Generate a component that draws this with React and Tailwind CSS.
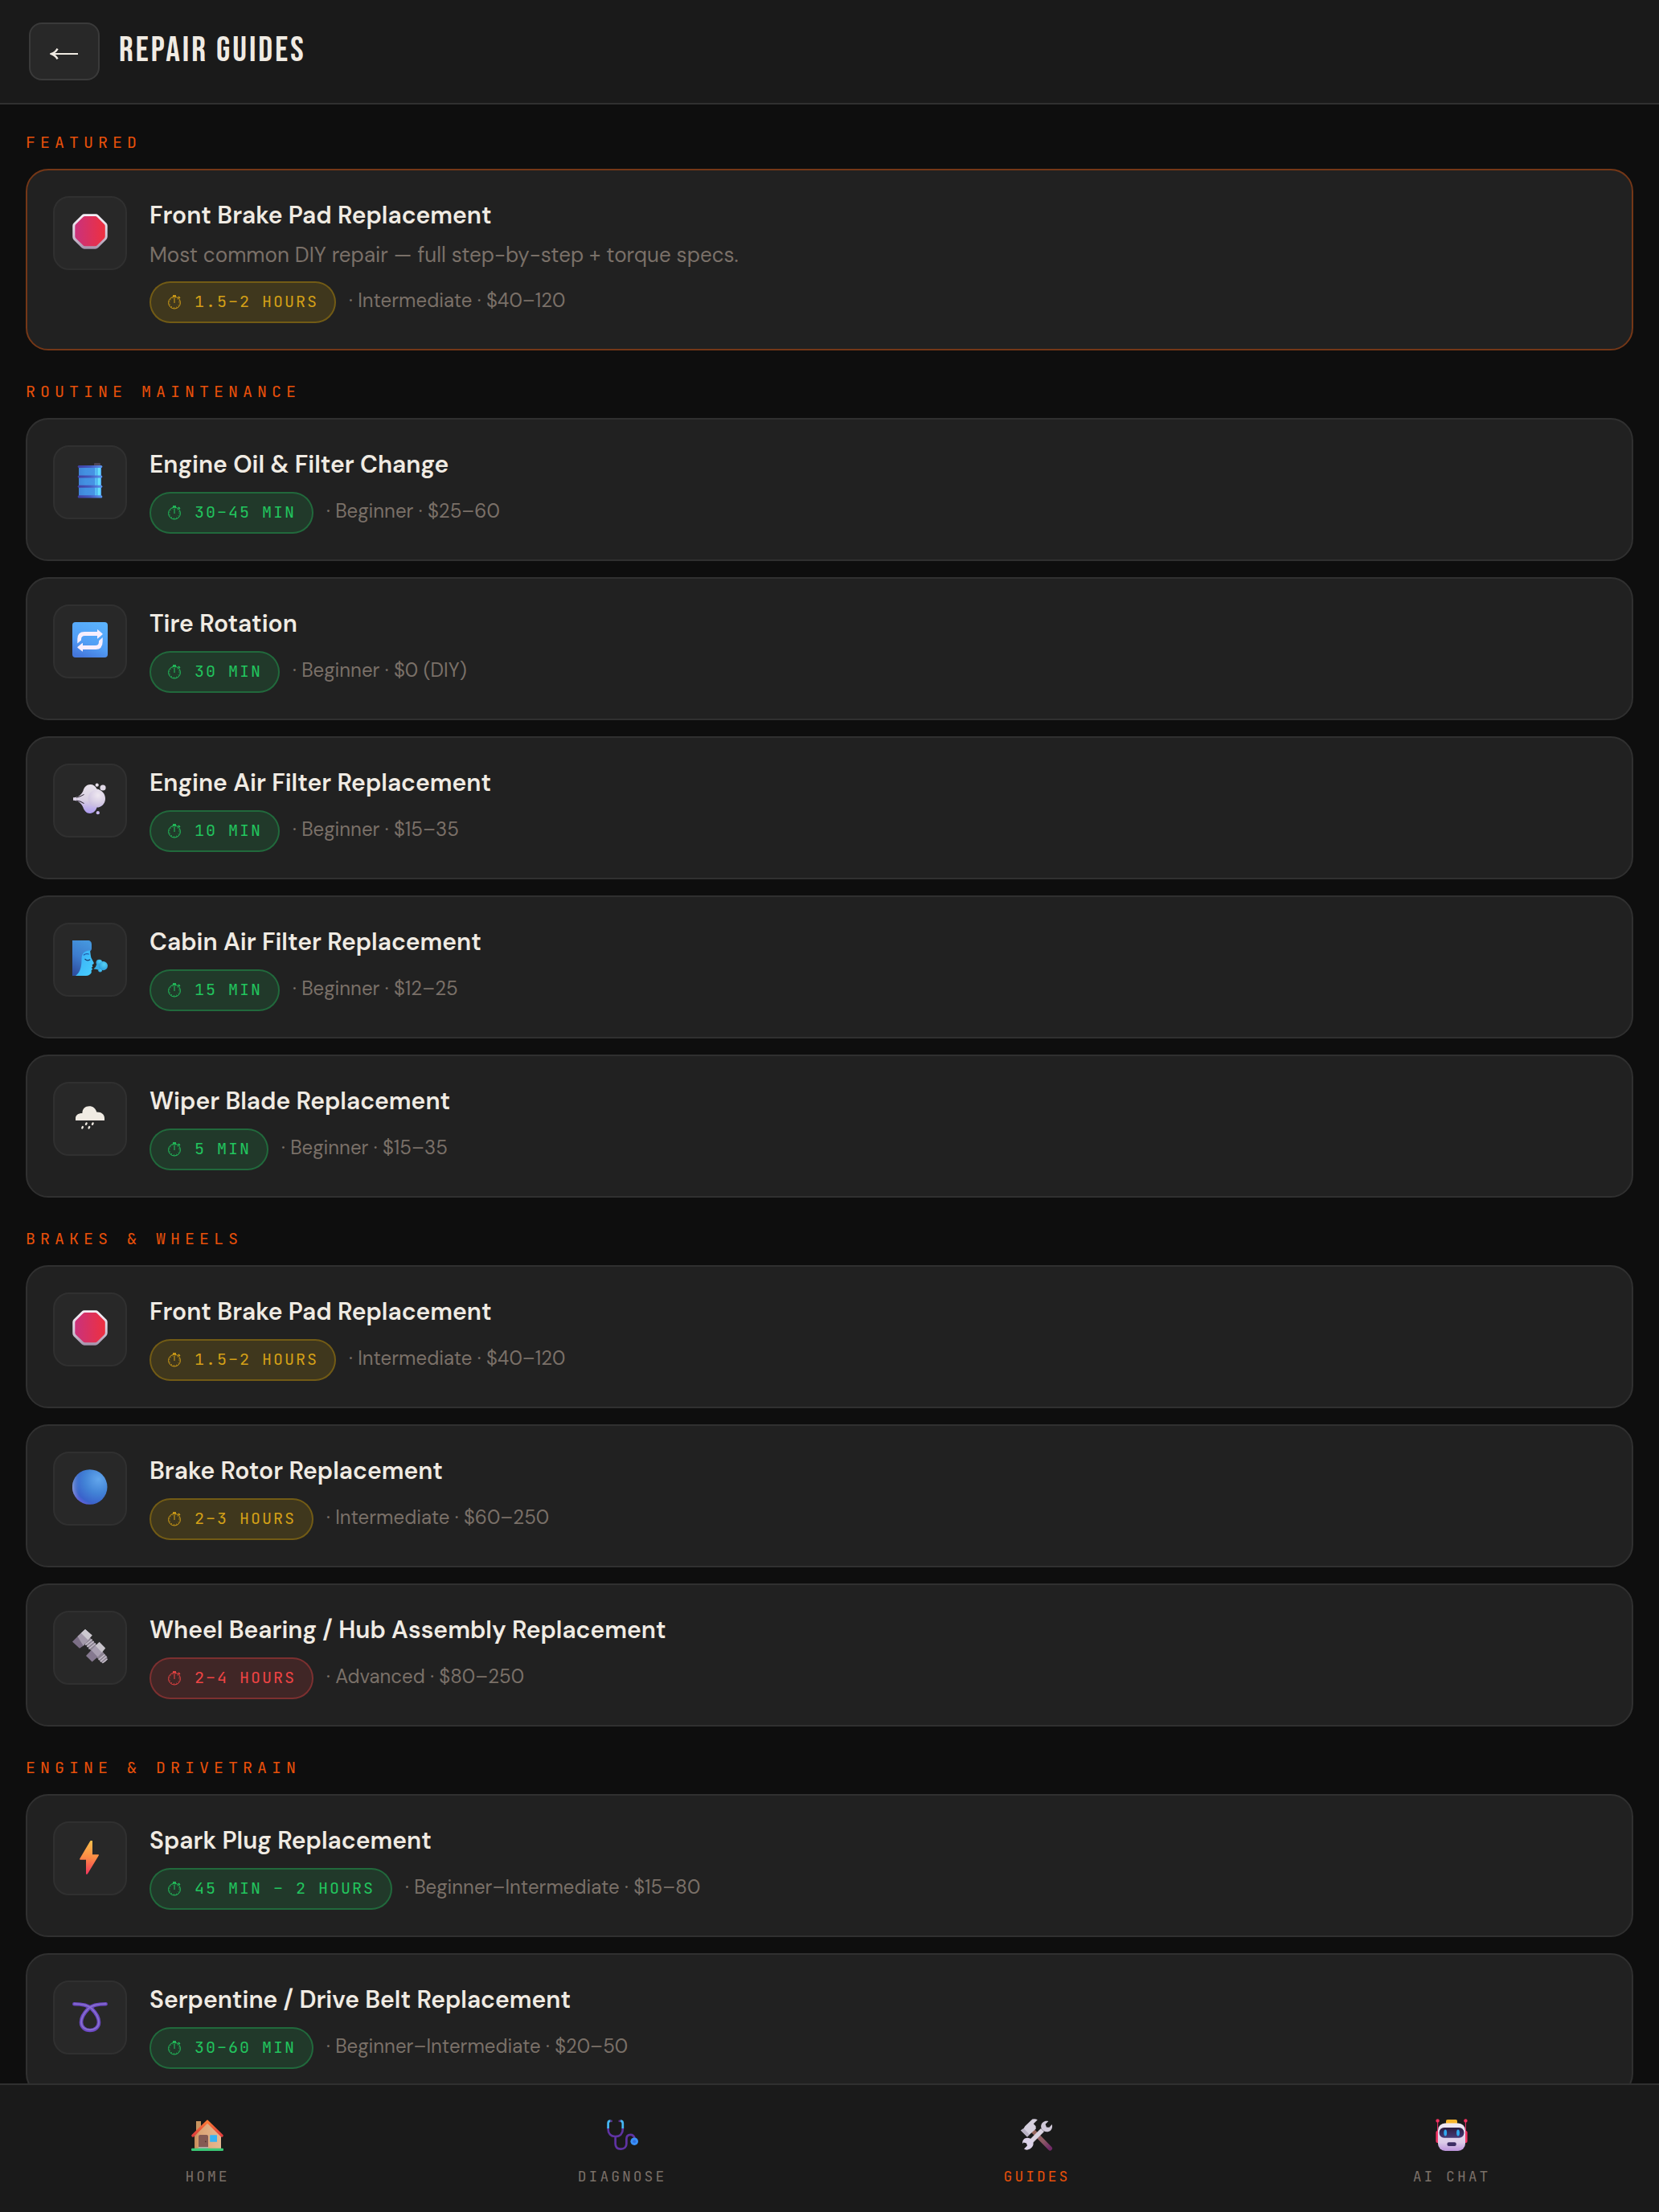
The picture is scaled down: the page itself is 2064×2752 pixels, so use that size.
import React from "react";

const guideGroups = [
  {
    label: "Featured",
    guides: [
      {
        icon: "stop",
        title: "Front Brake Pad Replacement",
        desc: "Most common DIY repair — full step-by-step + torque specs.",
        time: "1.5–2 hours",
        level: "Intermediate",
        cost: "$40–120",
        tone: "medium",
        featured: true,
      },
    ],
  },
  {
    label: "Routine Maintenance",
    guides: [
      { icon: "barrel", title: "Engine Oil & Filter Change", time: "30–45 min", level: "Beginner", cost: "$25–60", tone: "easy" },
      { icon: "repeat", title: "Tire Rotation", time: "30 min", level: "Beginner", cost: "$0 (DIY)", tone: "easy" },
      { icon: "puff", title: "Engine Air Filter Replacement", time: "10 min", level: "Beginner", cost: "$15–35", tone: "easy" },
      { icon: "wind", title: "Cabin Air Filter Replacement", time: "15 min", level: "Beginner", cost: "$12–25", tone: "easy" },
      { icon: "rain", title: "Wiper Blade Replacement", time: "5 min", level: "Beginner", cost: "$15–35", tone: "easy" },
    ],
  },
  {
    label: "Brakes & Wheels",
    guides: [
      { icon: "stop", title: "Front Brake Pad Replacement", time: "1.5–2 hours", level: "Intermediate", cost: "$40–120", tone: "medium" },
      { icon: "disc", title: "Brake Rotor Replacement", time: "2–3 hours", level: "Intermediate", cost: "$60–250", tone: "medium" },
      { icon: "bolt", title: "Wheel Bearing / Hub Assembly Replacement", time: "2–4 hours", level: "Advanced", cost: "$80–250", tone: "hard" },
    ],
  },
  {
    label: "Engine & Drivetrain",
    guides: [
      { icon: "spark", title: "Spark Plug Replacement", time: "45 min – 2 hours", level: "Beginner–Intermediate", cost: "$15–80", tone: "easy" },
      { icon: "loop", title: "Serpentine / Drive Belt Replacement", time: "30–60 min", level: "Beginner–Intermediate", cost: "$20–50", tone: "easy" },
    ],
  },
];

const tones = {
  easy: "bg-[#22c55e]/15 border-[#22c55e]/35 text-[#22c55e]",
  medium: "bg-[#eab308]/15 border-[#eab308]/30 text-[#d4a017]",
  hard: "bg-[#ef4444]/15 border-[#ef4444]/35 text-[#ef4444]",
};

const StopIcon = () => (
  <svg viewBox="0 0 44 44" className="size-11" aria-hidden="true">
    <defs>
      <linearGradient id="stopRim" x1="0" y1="0" x2="0" y2="1">
        <stop offset="0" stopColor="#f6f1f8" />
        <stop offset="0.6" stopColor="#d3c9d8" />
        <stop offset="1" stopColor="#a393ab" />
      </linearGradient>
      <linearGradient id="stopFace" x1="0" y1="0" x2="1" y2="0">
        <stop offset="0" stopColor="#c9327c" />
        <stop offset="1" stopColor="#ee3040" />
      </linearGradient>
    </defs>
    <path d="M15 0.3H29Q31 0.3 32.4 1.7L42.3 11.6Q43.7 13 43.7 15V28.5Q43.7 30.5 42.3 31.9L32 42.3Q30.6 43.7 28.6 43.7H15Q13 43.7 11.6 42.3L1.7 32.4Q0.3 31 0.3 29V15Q0.3 13 1.7 11.6L11.6 1.7Q13 0.3 15 0.3Z" fill="url(#stopRim)" />
    <path d="M15.8 3H28.4Q29.8 3 30.8 4L39.8 13Q40.8 14 40.8 15.4V28Q40.8 29.4 39.8 30.4L30.8 39.3Q29.8 40.3 28.4 40.3H15.8Q14.4 40.3 13.4 39.3L4.3 30.4Q3.3 29.4 3.3 28V15.4Q3.3 14 4.3 13L13.4 4Q14.4 3 15.8 3Z" fill="url(#stopFace)" />
  </svg>
);

const BarrelIcon = () => (
  <svg viewBox="0 0 44 44" className="size-11" aria-hidden="true">
    <defs>
      <linearGradient id="barrelBody" x1="0" y1="0" x2="1" y2="0">
        <stop offset="0" stopColor="#3f83d6" />
        <stop offset="0.3" stopColor="#4391e2" />
        <stop offset="0.7" stopColor="#4793e4" />
        <stop offset="0.76" stopColor="#5fd0fa" />
        <stop offset="0.8" stopColor="#4aa8ee" />
        <stop offset="0.9" stopColor="#6ff0ff" />
        <stop offset="1" stopColor="#4a9df0" />
      </linearGradient>
      <linearGradient id="barrelRib" x1="0" y1="0" x2="1" y2="0">
        <stop offset="0" stopColor="#413ea0" />
        <stop offset="0.5" stopColor="#4358bd" />
        <stop offset="1" stopColor="#5b95ee" />
      </linearGradient>
    </defs>
    <rect x="27" y="0" width="8" height="4" rx="1" fill="#4d4456" />
    <rect x="8" y="4" width="28" height="38" fill="url(#barrelBody)" />
    <rect x="6.7" y="3" width="30.6" height="3" rx="1.5" fill="url(#barrelRib)" />
    <rect x="6.7" y="15.4" width="30.6" height="3" rx="1.5" fill="url(#barrelRib)" />
    <rect x="6.7" y="27.8" width="30.6" height="3" rx="1.5" fill="url(#barrelRib)" />
    <rect x="6.7" y="40.3" width="30.6" height="3.2" rx="1.5" fill="url(#barrelRib)" />
  </svg>
);

const RepeatIcon = () => (
  <svg viewBox="0 0 44 44" className="size-11" aria-hidden="true">
    <defs>
      <linearGradient id="repeatBg" x1="0.7" y1="0" x2="0.3" y2="1">
        <stop offset="0" stopColor="#5ab2fd" />
        <stop offset="0.6" stopColor="#529ef5" />
        <stop offset="1" stopColor="#4477dc" />
      </linearGradient>
    </defs>
    <rect width="44" height="44" rx="4" fill="url(#repeatBg)" />
    <g fill="#f7eefd">
      <path d="M6.3 26.5V21Q6.3 12 15 12H31V9.6Q31 8.6 31.8 9.4L37.4 14.2Q38 14.8 37.4 15.4L31.8 20.2Q31 21 31 20V17H15.5Q11 17 11 21.5V22.6Z" />
      <path d="M37.7 19V24Q37.7 34 29 34H13V36Q13 37 12.2 36.3L6.6 32Q6 31.4 6.6 30.8L12.2 26.2Q13 25.5 13 26.5V29H28.5Q33 29 33 24.5V23.2Z" />
    </g>
  </svg>
);

const PuffIcon = () => (
  <svg viewBox="0 0 44 44" className="size-11" aria-hidden="true">
    <defs>
      <linearGradient id="puffFill" x1="0.5" y1="0" x2="0.4" y2="1">
        <stop offset="0" stopColor="#e8e2ec" />
        <stop offset="0.55" stopColor="#d8cfe2" />
        <stop offset="1" stopColor="#ab98f0" />
      </linearGradient>
      <radialGradient id="puffGlow" cx="0.6" cy="0.3" r="0.7">
        <stop offset="0" stopColor="#f4eef4" />
        <stop offset="1" stopColor="#c9bdde" />
      </radialGradient>
    </defs>
    <path d="M1 20.3C8 20 11 16.5 13.4 12C14.6 7 18 4 22.3 4C26 4 29 6 30.4 9.5C36.5 10.5 41 15.5 41 21.5C41 28 36.2 32.6 30.6 32.6C29.2 37 26 40 22 40C17.5 40 14.8 36.5 13.2 32C11 27.5 7.5 24 1 23.8Z" fill="url(#puffFill)" />
    <ellipse cx="30" cy="21.5" rx="10.5" ry="10.5" fill="url(#puffGlow)" opacity="0.75" />
    <path d="M5 20.2C9 19.6 12 18 14.5 16.4M5 24C9 24.4 12 25.6 14.5 27.6" fill="none" stroke="#37303c" strokeWidth="1.1" />
    <circle cx="30.7" cy="4.7" r="2.1" fill="#e6dfe8" />
    <circle cx="38" cy="8" r="3.6" fill="#e0d8e6" />
    <circle cx="31.8" cy="39.2" r="2.1" fill="#c8b8f0" />
  </svg>
);

const WindIcon = () => (
  <svg viewBox="0 0 44 44" className="size-11" aria-hidden="true">
    <defs>
      <linearGradient id="windHair" x1="0.6" y1="0" x2="0.3" y2="1">
        <stop offset="0" stopColor="#4596dd" />
        <stop offset="0.5" stopColor="#3d7ccd" />
        <stop offset="1" stopColor="#2f4f9f" />
      </linearGradient>
      <linearGradient id="windFace" x1="0" y1="0" x2="1" y2="1">
        <stop offset="0" stopColor="#38abf5" />
        <stop offset="1" stopColor="#48d0ff" />
      </linearGradient>
      <radialGradient id="windPuff" cx="0.6" cy="0.35" r="0.7">
        <stop offset="0" stopColor="#55d2f4" />
        <stop offset="1" stopColor="#2b9bdc" />
      </radialGradient>
    </defs>
    <path d="M0 0H19C22.5 0 24 2 24 5V10C24 14 20 14 16 16L12 44H0Z" fill="url(#windHair)" />
    <path d="M4 44C10 40 11.5 32 11.5 24C11.5 17 14 13 22 12.5C22.6 16 22.8 19 23.4 21.5L26.8 28Q27.2 29.5 24.6 30.2L25.4 32.8L23.6 34L25.2 35.6L23.6 37.4L23.8 40Q21.5 44 17 44Z" fill="url(#windFace)" />
    <path d="M14.4 18C16 16.6 18.4 16.4 20.4 17" fill="none" stroke="#2257a8" strokeWidth="1.2" strokeLinecap="round" />
    <path d="M16 23.4C17.4 25 20 25 21.8 24" fill="none" stroke="#173a6c" strokeWidth="1.4" strokeLinecap="round" />
    <path d="M26.4 35.6L31 31L34 36.5Z" fill="#38aee5" />
    <circle cx="33.4" cy="27.6" r="3.9" fill="url(#windPuff)" />
    <circle cx="34.6" cy="37.2" r="2.4" fill="url(#windPuff)" />
    <circle cx="32.6" cy="33" r="3.4" fill="#38aee5" />
    <circle cx="38.4" cy="31.6" r="5.6" fill="url(#windPuff)" />
  </svg>
);

const RainIcon = () => (
  <svg viewBox="0 0 44 44" className="size-11" aria-hidden="true">
    <path d="M4 26V23.5C4 19.5 7 17 12.4 17C12.4 11.5 16 8.3 21 8.3C25.8 8.3 29 11 30.2 15.4C36.4 15.2 40 18.5 40 23V26Z" fill="#f0ebe3" />
    <path d="M17.6 29.4L17 30.8M25.6 29.4L25 30.8M12.9 34L12.3 35.4M21.2 34L20.6 35.4" stroke="#f0ebe3" strokeWidth="2.4" strokeLinecap="round" />
  </svg>
);

const DiscIcon = () => (
  <svg viewBox="0 0 44 44" className="size-11" aria-hidden="true">
    <defs>
      <radialGradient id="discFill" cx="0.75" cy="0.28" r="0.8">
        <stop offset="0" stopColor="#62a6ec" />
        <stop offset="0.5" stopColor="#4283d6" />
        <stop offset="0.88" stopColor="#3a63cb" />
        <stop offset="1" stopColor="#5a62d8" />
      </radialGradient>
      <linearGradient id="discEdge" x1="0" y1="0" x2="1" y2="0">
        <stop offset="0" stopColor="#a0b8d8" stopOpacity="0.6" />
        <stop offset="0.2" stopColor="#7090c8" stopOpacity="0" />
      </linearGradient>
    </defs>
    <circle cx="21.7" cy="22" r="21.8" fill="url(#discFill)" />
    <circle cx="21.7" cy="22" r="21.8" fill="url(#discEdge)" />
  </svg>
);

const BoltIcon = () => (
  <svg viewBox="0 0 44 44" className="size-11" aria-hidden="true">
    <path d="M15 18L22 11.5L43 35Q44.4 38 41.5 41Q38.6 43.8 35.6 42Z" fill="#8d8493" />
    <path d="M16 20.5L24.6 13.4M18.2 23L26.8 16M20.4 25.4L29 18.4M32.6 39L40.4 32.4M34.8 41.2L42.4 34.8M37.4 43L43.6 38" stroke="#c9c2cd" strokeWidth="1.3" />
    <path d="M0 16.5L6.5 10L16 20L9 24.8Z" fill="#7c6f86" />
    <path d="M6.5 10L16 1L24.6 8.6L16 18.6Z" fill="#bcb6c0" />
    <path d="M16 1L24.6 8.6L19.5 14.4L10.8 5.8Z" fill="#cdc9d0" />
    <path d="M6.5 10L10.8 5.8L19.5 14.4L13.6 21.4Z" fill="#a49aab" />
    <path d="M17 34L23.6 27L31.6 35.4L24.6 41.4Z" fill="#85788f" />
    <path d="M23.6 27L28.6 21.6L36.8 30L31.6 35.4Z" fill="#a89eb0" />
    <path d="M28.6 21.6L33.6 16.8L41.2 24.4L36.8 30Z" fill="#c8c3cb" />
  </svg>
);

const SparkIcon = () => (
  <svg viewBox="0 0 44 44" className="size-11" aria-hidden="true">
    <defs>
      <linearGradient id="sparkFill" x1="0.5" y1="0" x2="0.45" y2="1">
        <stop offset="0" stopColor="#fcc04c" />
        <stop offset="0.5" stopColor="#fc8a45" />
        <stop offset="1" stopColor="#f3365b" />
      </linearGradient>
    </defs>
    <path d="M22.2 2.4Q22.6 2 23 2H24.6Q25 2 25 2.6V19.3H32.2Q33.4 19.4 32.8 20.4L19 43.2Q18.6 43.8 18 43.8H17.4Q17 43.8 17 43.2V25.8H9.8Q8.6 25.6 9.2 24.6Z" fill="url(#sparkFill)" />
  </svg>
);

const LoopIcon = () => (
  <svg viewBox="0 0 44 44" className="size-11" aria-hidden="true">
    <g fill="none" strokeLinecap="round">
      <path d="M2.4 7.2C13 7.2 19.6 8.6 24 13C30 19 33 25 33 30C33 36 28 40 22 40C16 40 11 36 11 30C11 25 14 19 20 13C24.4 8.6 31 7.2 41.6 7.2" stroke="#6c48c4" strokeWidth="4.6" />
      <path d="M2.4 7C13 7 19.6 8.4 24 12.8C30 18.8 32.8 25 32.8 30C32.8 36 28 39.4 22 39.4C16 39.4 11.2 36 11.2 30C11.2 25 14 18.8 20 12.8C24.4 8.4 31 7 41.6 7" stroke="#8a74cf" strokeWidth="1.6" />
    </g>
  </svg>
);

const guideIcons = {
  stop: StopIcon,
  barrel: BarrelIcon,
  repeat: RepeatIcon,
  puff: PuffIcon,
  wind: WindIcon,
  rain: RainIcon,
  disc: DiscIcon,
  bolt: BoltIcon,
  spark: SparkIcon,
  loop: LoopIcon,
};

const HomeIcon = () => (
  <svg viewBox="0 0 40 40" className="size-10" aria-hidden="true">
    <defs>
      <linearGradient id="homeWall" x1="0" y1="0" x2="1" y2="0">
        <stop offset="0" stopColor="#c58a58" />
        <stop offset="0.2" stopColor="#dba474" />
        <stop offset="1" stopColor="#e6b891" />
      </linearGradient>
      <linearGradient id="homeRoof" x1="0" y1="0" x2="0" y2="1">
        <stop offset="0" stopColor="#fb7a36" />
        <stop offset="1" stopColor="#e03c3c" />
      </linearGradient>
    </defs>
    <rect x="6" y="3" width="6" height="16" fill="#c9945f" />
    <path d="M4 19L20 4L37 19V37H4Z" fill="url(#homeWall)" />
    <path d="M20 3.4L2 21M20 3.4L38 21" fill="none" stroke="url(#homeRoof)" strokeWidth="3.4" strokeLinecap="round" />
    <path d="M9 22Q9 20 11 20H19Q21 20 21 22V36H9Z" fill="#845a53" />
    <rect x="9" y="35" width="12" height="2" fill="#b5aaa8" />
    <circle cx="17.8" cy="28.4" r="0.8" fill="#4e322f" />
    <rect x="23.2" y="20.2" width="8.8" height="8.6" rx="0.6" fill="#35b2f4" />
    <rect x="0" y="36.8" width="40" height="3.2" rx="1.2" fill="#3ac876" />
  </svg>
);

const DiagnoseIcon = () => (
  <svg viewBox="0 0 40 40" className="size-10" aria-hidden="true">
    <g fill="none" strokeWidth="2.7" strokeLinecap="round">
      <path d="M2.6 12V13C2.6 18.4 6 22 11.6 22C17.4 22 20.8 18.4 20.8 13V12M11.6 22V31C11.6 35.4 14.4 37.6 18.4 37.6C22.6 37.6 25.4 35.2 25.4 31V25C25.4 21.6 27.6 19.8 30.4 19.8C33.4 19.8 35 21.6 35.6 24.4" stroke="#5f33a3" />
      <path d="M5.6 2.6C3.4 2.6 2.6 3.6 2.6 5.6V12M17.8 2.6C20 2.6 20.8 3.6 20.8 5.6V12" stroke="#45b8f5" strokeLinecap="butt" />
      <path d="M6.6 2.8V3M16.8 2.8V3" stroke="#5b3590" />
    </g>
    <circle cx="35.2" cy="28.2" r="4.8" fill="#3a90f6" />
    <circle cx="35.2" cy="28.2" r="1.9" fill="#2f6fe0" />
  </svg>
);

const ToolsIcon = () => (
  <svg viewBox="0 0 40 40" className="size-10" aria-hidden="true">
    <defs>
      <linearGradient id="toolsHandle" x1="0" y1="0" x2="1" y2="1">
        <stop offset="0" stopColor="#96665a" />
        <stop offset="0.6" stopColor="#8c5a66" />
        <stop offset="1" stopColor="#702a66" />
      </linearGradient>
    </defs>
    <path d="M15 15L36.4 36.8" stroke="url(#toolsHandle)" strokeWidth="5.4" strokeLinecap="round" />
    <path d="M14.4 0.6Q17.6 -0.4 20.8 1.2L15.8 6.2L18.6 9.2L18.8 12.6L10 20.6L8 22.6L0 14.4L3.6 12L5.2 9.2Z" fill="#d5cfde" />
    <path d="M0 14.4L3.6 12L11 19.8L8 22.6Z" fill="#b9b2c4" />
    <path d="M27 14L12 29" stroke="#d9d2e0" strokeWidth="5.6" />
    <path d="M34.4 3L30.6 6.8L32 10.4L35.4 10.8L38.8 7C40 11.4 37.8 15.6 33.6 16.2C28.4 17 24.6 13 25.2 8.6C25.8 4.4 30 1.6 34.4 3Z" fill="#cfc8d8" />
    <path d="M4 37.4L8 33.6L7 30.4L3.6 29.6L2.2 31C1.4 26.4 5 23.6 8.4 23.8C13 24 16 27.6 15.6 31.6C15.2 36 10 39.4 6 38.6Z" fill="#dcd2e8" />
  </svg>
);

const RobotIcon = () => (
  <svg viewBox="0 0 40 40" className="size-10" aria-hidden="true">
    <defs>
      <linearGradient id="robotHead" x1="0.5" y1="0" x2="0.5" y2="1">
        <stop offset="0" stopColor="#f0eaf4" />
        <stop offset="0.7" stopColor="#dccbe8" />
        <stop offset="1" stopColor="#bd94dc" />
      </linearGradient>
      <linearGradient id="robotVisor" x1="0" y1="0" x2="0" y2="1">
        <stop offset="0" stopColor="#2c1c40" />
        <stop offset="1" stopColor="#453b78" />
      </linearGradient>
    </defs>
    <path d="M2.6 3V20M37.4 3V20" stroke="#d42a62" strokeWidth="1.2" />
    <circle cx="2.6" cy="2.4" r="2.2" fill="#f0305f" />
    <circle cx="37.4" cy="2.4" r="2.2" fill="#f0305f" />
    <rect x="0.4" y="15" width="5" height="15" rx="2" fill="#f23564" />
    <rect x="34.6" y="15" width="5" height="15" rx="2" fill="#f23564" />
    <rect x="13" y="1" width="14" height="6" rx="2" fill="#f8b52c" />
    <rect x="3" y="5.4" width="34" height="34.6" rx="9" fill="url(#robotHead)" />
    <rect x="4.6" y="11" width="30.8" height="12.8" rx="6" fill="url(#robotVisor)" />
    <ellipse cx="12.2" cy="17.6" rx="1.9" ry="4" fill="#2fa8ee" />
    <ellipse cx="28" cy="17.6" rx="1.9" ry="4" fill="#2fa8ee" />
    <rect x="14.4" y="29.2" width="11.4" height="4.8" rx="2.2" fill="#3c2d63" />
  </svg>
);

const navItems = [
  { label: "Home", icon: HomeIcon },
  { label: "Diagnose", icon: DiagnoseIcon },
  { label: "Guides", icon: ToolsIcon, active: true },
  { label: "AI Chat", icon: RobotIcon },
];

const Stopwatch = () => (
  <svg viewBox="0 0 20 20" className="size-5 self-center" fill="none" stroke="currentColor" aria-hidden="true">
    <circle cx="9" cy="10.6" r="7.4" strokeWidth="1" />
    <circle cx="9" cy="10.6" r="6" strokeWidth="1.2" strokeDasharray="0.6 2.54" />
    <path d="M9 4.8V11" strokeWidth="1" />
    <path d="M7 2H11" strokeWidth="1.8" />
    <path d="M13.8 3.2L16 4.8" strokeWidth="1.5" />
  </svg>
);

const GuideCard = ({ guide }) => {
  const Icon = guideIcons[guide.icon];

  return (
    <a
      href="#"
      className={`flex items-start gap-7 rounded-[28px] border-2 bg-[#212121] p-8 ${guide.featured ? "border-[#743717]" : "border-[#303030]"}`}
    >
      <div className="flex size-[92px] shrink-0 items-center justify-center rounded-[20px] border-2 border-[#303030] bg-[#282828] pb-1">
        <Icon />
      </div>
      <div className="min-w-0 flex-1">
        <h3 className="text-[30px] leading-[48px] font-semibold text-[#f0ebe3]">{guide.title}</h3>
        {guide.desc && <p className="mt-1 pb-[2px] text-[26px] leading-[42px] text-[#7a7068]">{guide.desc}</p>}
        <div className="mt-[10px] flex items-baseline gap-4">
          <span
            className={`inline-flex h-[52px] items-baseline gap-[14px] rounded-full border-2 px-5 font-['JetBrains_Mono','DejaVu_Sans_Mono',monospace] text-[20px] leading-[46px] tracking-[2px] uppercase ${tones[guide.tone]}`}
          >
            <Stopwatch />
            {guide.time}
          </span>
          <span className="text-[24px] text-[#7a7068]">
            · {guide.level} · {guide.cost}
          </span>
        </div>
      </div>
    </a>
  );
};

const App = () => {
  return (
    <div className="flex h-screen flex-col bg-[#0e0e0e] font-['DM_Sans','Inter',sans-serif]">
      <header className="flex shrink-0 items-center gap-6 border-b-2 border-[#303030] bg-[#1a1a1a] px-9 py-7">
        <button
          type="button"
          aria-label="Back"
          className="flex h-[72px] w-[88px] items-center justify-center rounded-2xl border-2 border-[#3a3a3a] bg-[#282828] text-[#f0ebe3]"
        >
          <svg viewBox="0 0 36 20" className="h-5 w-9" fill="none" stroke="currentColor" aria-hidden="true">
            <path d="M2 13H35" strokeWidth="2.2" />
            <path d="M9.6 6.6Q6.8 11.4 2 13Q6.8 14.6 9.6 19.4" strokeWidth="2.4" />
          </svg>
        </button>
        <h1 className="pb-[2px] font-['Bebas_Neue','Liberation_Sans_Narrow',sans-serif] text-[44px] leading-[48px] font-normal tracking-[3px] text-[#f0ebe3] uppercase">
          Repair Guides
        </h1>
      </header>

      {/* Guide list */}
      <main className="flex min-h-0 flex-1 flex-col gap-[38px] overflow-y-auto px-8 py-[34px] [scrollbar-width:none]">
        {guideGroups.map((group) => (
          <section key={group.label} className="flex flex-col gap-5">
            <h2 className="font-['JetBrains_Mono','DejaVu_Sans_Mono',monospace] text-[20px] leading-[26px] tracking-[6px] text-[#e8500a] uppercase">
              {group.label}
            </h2>
            {group.guides.map((guide) => (
              <GuideCard key={guide.title} guide={guide} />
            ))}
          </section>
        ))}
      </main>

      {/* Bottom navigation */}
      <nav className="grid shrink-0 grid-cols-4 border-t-2 border-[#303030] bg-[#1a1a1a]">
        {navItems.map(({ label, icon: Icon, active }) => (
          <a
            key={label}
            href="#"
            className={`flex flex-col items-center gap-5 pt-[42px] pb-8 font-['JetBrains_Mono','DejaVu_Sans_Mono',monospace] text-[18px] leading-6 tracking-[3px] uppercase ${active ? "text-[#e8500a]" : "text-[#7a7068]"}`}
          >
            <Icon />
            {label}
          </a>
        ))}
      </nav>
    </div>
  );
};

export default App;
